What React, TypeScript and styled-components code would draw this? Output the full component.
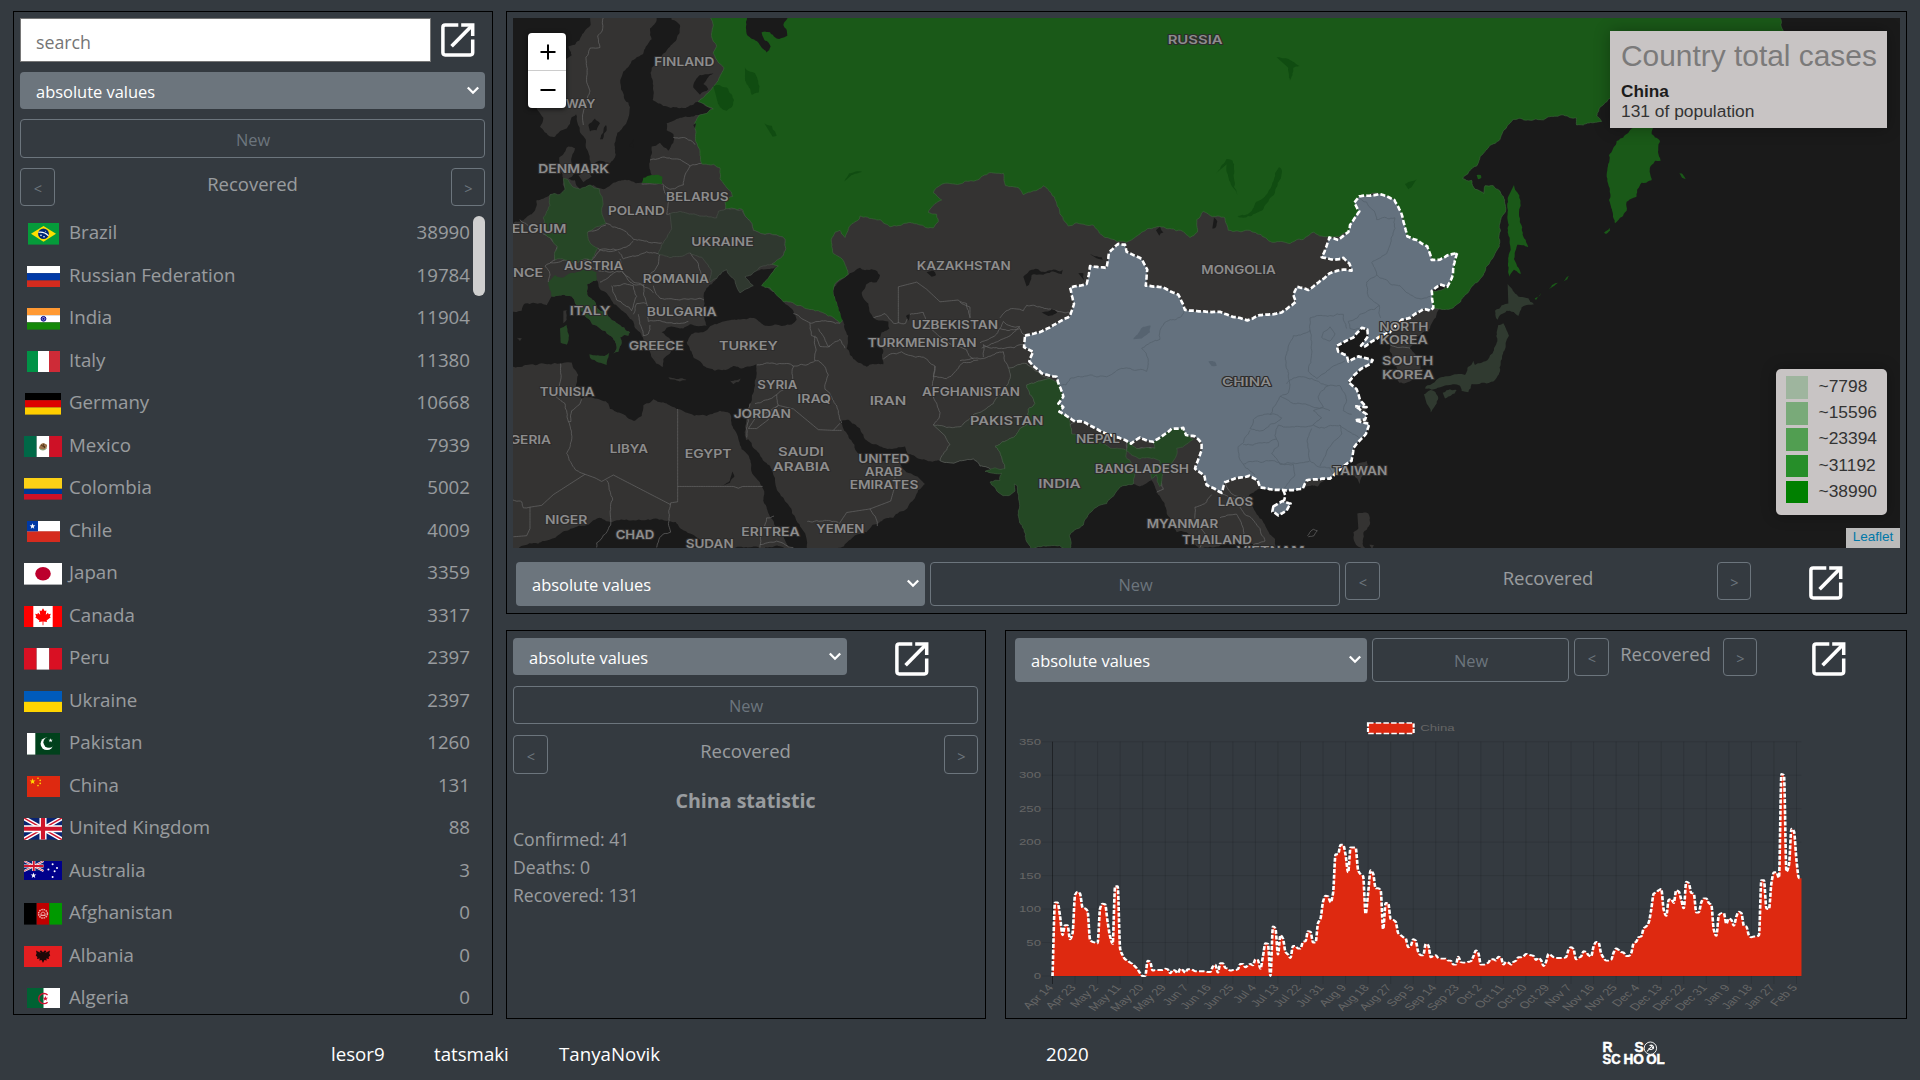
import React from "react";
import styled, { createGlobalStyle } from "styled-components";

const GlobalStyle = createGlobalStyle`
  *, *::before, *::after { box-sizing: border-box; }
  body {
    margin: 0;
    background: #343a40;
    color: rgba(255, 255, 255, 0.5);
    font-family: "Open Sans", "Noto Sans", sans-serif;
    overflow: hidden;
  }
`;

/* ------------------------------------------------------------------ layout */

const Page = styled.div`
  display: flex;
  flex-direction: column;
  width: 1920px;
  height: 1080px;
  padding: 11px 13px 0;
`;

const Main = styled.main`
  display: grid;
  grid-template-columns: 480px 1401px;
  column-gap: 13px;
  align-items: start;
  height: 1008px;
`;

const RightColumn = styled.div`
  display: grid;
  grid-template-rows: 603px 389px;
  row-gap: 16px;
`;

const BottomRow = styled.div`
  display: grid;
  grid-template-columns: 480px 902px;
  column-gap: 19px;
`;

const Panel = styled.section<{ $height?: number; $pad?: string }>`
  display: flex;
  flex-direction: column;
  min-width: 0;
  height: ${(p) => (p.$height ? `${p.$height}px` : "auto")};
  padding: ${(p) => p.$pad ?? "6px"};
  border: 1px solid #000;
  overflow: hidden;
`;

const Row = styled.div<{ $mt?: number; $h?: number; $w?: number; $ml?: number }>`
  display: flex;
  align-items: flex-start;
  margin-top: ${(p) => p.$mt ?? 0}px;
  margin-left: ${(p) => p.$ml ?? 0}px;
  width: ${(p) => (p.$w ? `${p.$w}px` : "auto")};
  height: ${(p) => (p.$h ? `${p.$h}px` : "auto")};
`;

/* ---------------------------------------------------------------- controls */

const Search = styled.input`
  width: 411px;
  height: 44px;
  padding: 3px 0 0 15px;
  border: 1px solid #767676;
  border-radius: 0;
  background: #fff;
  font: 17.8px "Open Sans", sans-serif;
  outline: none;
  &::placeholder { color: #757575; opacity: 1; }
`;

const SelectBox = styled.div<{ $w: number; $h: number; $ml?: number }>`
  display: flex;
  align-items: center;
  justify-content: space-between;
  flex: none;
  width: ${(p) => p.$w}px;
  height: ${(p) => p.$h}px;
  margin-left: ${(p) => p.$ml ?? 0}px;
  padding: 1px 5px 0 16px;
  border-radius: 4px;
  background: #6c757d;
  color: #fff;
  font-size: 16.45px;
  svg { margin-top: -2px; }
`;

const OutlineButton = styled.button<{ $w: number; $h: number; $ml?: number; $small?: boolean }>`
  flex: none;
  width: ${(p) => p.$w}px;
  height: ${(p) => p.$h}px;
  margin-left: ${(p) => p.$ml ?? 0}px;
  padding: ${(p) => (p.$small ? "3px 0 0 1px" : "1px 0 0 1px")};
  border: 1px solid #6c757d;
  border-radius: 4px;
  background: transparent;
  color: #6c757d;
  font: ${(p) => (p.$small ? "14.5px" : "16.4px")} "Open Sans", sans-serif;
`;

const StepLabel = styled.span`
  flex: 1;
  text-align: center;
  font-size: 18.5px;
  line-height: 31px;
  text-indent: -1px;
`;

const IconSlot = styled.span<{ $ml: number; $mt?: number }>`
  display: block;
  flex: none;
  width: 34px;
  height: 34px;
  margin-left: ${(p) => p.$ml}px;
  margin-top: ${(p) => p.$mt ?? 0}px;
  svg { display: block; }
`;

const ExpandIcon = ({ ml, mt }: { ml: number; mt?: number }) => (
  <IconSlot $ml={ml} $mt={mt}>
    <svg width="34" height="34" viewBox="0 0 34 34" fill="none" stroke="#fff" strokeWidth="3.5">
      <path d="M17.3 1.9H4.2Q1.9 1.9 1.9 4.2V29.6Q1.9 31.9 4.2 31.9H29.4Q31.7 31.9 31.7 29.6V16.6" />
      <path d="M20.2 1.9H31.7V13" />
      <path d="M10.6 23.2L30.8 2.8" strokeWidth="3.7" />
    </svg>
  </IconSlot>
);

const Select = ({ w, h, ml }: { w: number; h: number; ml?: number }) => (
  <SelectBox $w={w} $h={h} $ml={ml}>
    absolute values
    <svg width="14" height="9" viewBox="0 0 14 9" fill="none" stroke="#fff" strokeWidth="2.3">
      <path d="M1.8 1.5L7 6.7L12.2 1.5" />
    </svg>
  </SelectBox>
);

const Stepper = ({ h }: { h: number }) => (
  <>
    <OutlineButton $w={35} $h={h} $small>&lt;</OutlineButton>
    <StepLabel>Recovered</StepLabel>
    <OutlineButton $w={34} $h={h} $small>&gt;</OutlineButton>
  </>
);

/* ------------------------------------------------------------ country list */

const ListArea = styled.div`
  display: flex;
  height: 792px;
  margin-top: 10px;
  overflow: hidden;
`;

const List = styled.ul`
  flex: 1;
  margin: 0;
  padding: 0;
  list-style: none;
`;

const Item = styled.li`
  display: grid;
  grid-template-columns: 49px 1fr auto;
  height: 42.5px;
  padding-right: 3px;
  font-size: 18.7px;
  line-height: 31px;
`;

const FlagCell = styled.span`
  display: flex;
  justify-content: center;
  padding: 7px 3px 0 0;
  svg { display: block; flex: none; }
`;

const ScrollThumb = styled.div`
  width: 12px;
  height: 80px;
  border-radius: 6px;
  background: #cfcfcf;
`;

const star = (cx: number, cy: number, r: number) => {
  const pts: string[] = [];
  for (let i = 0; i < 10; i++) {
    const a = -Math.PI / 2 + (i * Math.PI) / 5;
    const q = i % 2 ? r * 0.4 : r;
    pts.push(`${(cx + q * Math.cos(a)).toFixed(2)},${(cy + q * Math.sin(a)).toFixed(2)}`);
  }
  return pts.join(" ");
};

const Bands = ({ colors, vertical, w }: { colors: string[]; vertical?: boolean; w: number }) => (
  <>
    {colors.map((c, i) =>
      vertical ? (
        <rect key={i} x={(w / colors.length) * i} width={w / colors.length} height="22" fill={c} />
      ) : (
        <rect key={i} y={(22 / colors.length) * i} width={w} height={22 / colors.length} fill={c} />
      )
    )}
  </>
);

const UnionJack = ({ w, h }: { w: number; h: number }) => (
  <>
    <rect width={w} height={h} fill="#0a2472" />
    <path d={`M0 0L${w} ${h}M${w} 0L0 ${h}`} stroke="#fff" strokeWidth={h * 0.2} />
    <path d={`M0 0L${w} ${h}M${w} 0L0 ${h}`} stroke="#cf142b" strokeWidth={h * 0.07} />
    <path d={`M${w / 2} 0V${h}M0 ${h / 2}H${w}`} stroke="#fff" strokeWidth={h * 0.32} />
    <path d={`M${w / 2} 0V${h}M0 ${h / 2}H${w}`} stroke="#cf142b" strokeWidth={h * 0.19} />
  </>
);

type Country = { name: string; value: number; w: number; h?: number; flag: React.ReactNode };

const countries: Country[] = [
  {
    name: "Brazil", value: 38990, w: 31,
    flag: (
      <>
        <rect width="31" height="22" fill="#059b3a" />
        <polygon points="3,11 15.5,3 28,11 15.5,19" fill="#fedf00" />
        <circle cx="15.5" cy="11" r="5.4" fill="#002776" />
        <path d="M10.4 9.5Q16 8.5 20.5 13" stroke="#fff" strokeWidth="1.1" fill="none" />
        <circle cx="13" cy="12.6" r=".8" fill="#fff" /><circle cx="16" cy="14" r=".8" fill="#fff" /><circle cx="17.6" cy="8.4" r=".5" fill="#fff" />
      </>
    ),
  },
  { name: "Russian Federation", value: 19784, w: 33, flag: <Bands w={33} colors={["#fff", "#0039a6", "#d52b1e"]} /> },
  {
    name: "India", value: 11904, w: 33,
    flag: (
      <>
        <Bands w={33} colors={["#ff9933", "#fff", "#138808"]} />
        <circle cx="16.5" cy="11" r="2.4" fill="#8080c8" stroke="#000088" strokeWidth="1" />
        <circle cx="16.5" cy="11" r=".9" fill="#000088" />
      </>
    ),
  },
  { name: "Italy", value: 11380, w: 33, flag: <Bands vertical w={33} colors={["#009246", "#fff", "#ce2b37"]} /> },
  { name: "Germany", value: 10668, w: 36, flag: <Bands w={36} colors={["#000", "#dd0000", "#ffce00"]} /> },
  {
    name: "Mexico", value: 7939, w: 38,
    flag: (
      <>
        <Bands vertical w={38} colors={["#006847", "#fff", "#ce1126"]} />
        <path d="M15 12Q16 8 19.5 7.2L23 9Q23.5 12.5 20 14Q16.5 14.5 15 12Z" fill="#9a7148" />
        <path d="M17 9L21 12M20 8Q18 10 21 11" stroke="#4c3219" fill="none" />
        <path d="M15.3 12.6Q19 16 22.7 12.4" stroke="#7a9a6a" fill="none" />
      </>
    ),
  },
  {
    name: "Colombia", value: 5002, w: 38,
    flag: (
      <>
        <rect width="38" height="11" fill="#fcd116" />
        <rect y="11" width="38" height="5.5" fill="#003893" />
        <rect y="16.3" width="38" height="5.7" fill="#ce1126" />
      </>
    ),
  },
  {
    name: "Chile", value: 4009, w: 33,
    flag: (
      <>
        <rect width="33" height="11" fill="#fff" />
        <rect y="10.5" width="33" height="11.5" fill="#d52b1e" />
        <rect width="11" height="10.5" fill="#0039a6" />
        <polygon points={star(5.5, 5.4, 3)} fill="#fff" />
      </>
    ),
  },
  {
    name: "Japan", value: 3359, w: 38,
    flag: (<><rect width="38" height="22" fill="#fff" /><ellipse cx="19" cy="11" rx="7.8" ry="6.9" fill="#bc002d" /></>),
  },
  {
    name: "Canada", value: 3317, w: 38,
    flag: (
      <>
        <rect width="38" height="22" fill="#fff" />
        <rect width="9.3" height="22" fill="#f00" /><rect x="28.7" width="9.3" height="22" fill="#f00" />
        <path d="M19 2.2L20.6 5.2L22.4 4.5L21.8 9L24 7L24.6 8.4L26.8 8L25.8 10.6L26.8 11.4L22.6 14.8L23 16.4L19.4 15.9V19.6H18.6V15.9L15 16.4L15.4 14.8L11.2 11.4L12.2 10.6L11.2 8L13.4 8.4L14 7L16.2 9L15.6 4.5L17.4 5.2Z" fill="#f00" />
      </>
    ),
  },
  { name: "Peru", value: 2397, w: 38, flag: <Bands vertical w={38} colors={["#d91023", "#fff", "#d91023"]} /> },
  { name: "Ukraine", value: 2397, w: 38, flag: <Bands w={38} colors={["#005bbb", "#ffd500"]} /> },
  {
    name: "Pakistan", value: 1260, w: 33,
    flag: (
      <>
        <rect width="33" height="22" fill="#01411c" /><rect width="8.3" height="22" fill="#fff" />
        <circle cx="20" cy="11" r="6.4" fill="#fff" /><circle cx="22" cy="9.5" r="5.6" fill="#01411c" />
        <polygon points={star(23.6, 7.6, 2.3)} fill="#fff" />
      </>
    ),
  },
  {
    name: "China", value: 131, w: 33, h: 21,
    flag: (
      <>
        <rect width="33" height="22" fill="#de2910" />
        <polygon points={star(5.6, 5.4, 3.1)} fill="#ffde00" />
        {[[11, 2.2], [13.2, 4.4], [13.2, 7.4], [11, 9.6]].map(([x, y]) => (
          <circle key={y} cx={x} cy={y} r=".8" fill="#ffde00" />
        ))}
      </>
    ),
  },
  { name: "United Kingdom", value: 88, w: 38, flag: <UnionJack w={38} h={22} /> },
  {
    name: "Australia", value: 3, w: 38, h: 19,
    flag: (
      <>
        <rect width="38" height="22" fill="#00008b" />
        <UnionJack w={19.5} h={10} />
        <polygon points={star(9.5, 14.5, 3)} fill="#fff" />
        {[[28.6, 3.2], [24.4, 8.6], [33, 7], [28.6, 16], [30.6, 10.2]].map(([x, y]) => (
          <circle key={x + y} cx={x} cy={y} r="1" fill="#fff" />
        ))}
      </>
    ),
  },
  {
    name: "Afghanistan", value: 0, w: 38,
    flag: (
      <>
        <Bands vertical w={38} colors={["#000", "#bf0000", "#009900"]} />
        <circle cx="19" cy="11" r="4.4" fill="none" stroke="#f1a9a9" strokeWidth="1.5" strokeDasharray="1.6 .7" />
        <path d="M16.4 12.6H21.6M17 10.5Q19 7.6 21 10.5V12.5H17Z" stroke="#f5c4c4" strokeWidth=".8" fill="none" />
      </>
    ),
  },
  {
    name: "Albania", value: 0, w: 38, h: 21,
    flag: (
      <>
        <rect width="38" height="22" fill="#e41e20" />
        <path d="M19 6.2L17 4.2L15.6 5.6L17 7L12 4.4L12.6 7.6L11.8 9.6L13.4 11L13 13L15.8 12.6L15.2 14.6L17.6 14L19 17L20.4 14L22.8 14.6L22.2 12.6L25 13L24.6 11L26.2 9.6L25.4 7.6L26 4.4L21 7L22.4 5.6L21 4.2Z" fill="#1d0808" />
      </>
    ),
  },
  {
    name: "Algeria", value: 0, w: 33,
    flag: (
      <>
        <rect width="33" height="22" fill="#fff" /><rect width="16.5" height="22" fill="#006233" />
        <path d="M20.6 7.1A5.2 5.2 0 1 0 20.6 14.5" fill="none" stroke="#d21034" strokeWidth="1.3" />
        <polygon points={star(18.4, 10.8, 2.8)} fill="#d21034" />
      </>
    ),
  },
];

/* --------------------------------------------------------------------- map */

type Pt = [number, number];
/* Outlines are digitised on three sheets; each sheet starts at its own x. */
const W = 0;
const M = 1380;
const E = 2820;
type Seg = [number, string];

const parse = (segs: Seg[]): Pt[] =>
  segs.flatMap(([dx, s]) =>
    s.trim().split(/\s+/).map((p) => {
      const [x, y] = p.split(",").map(Number);
      return [x + dx, y] as Pt;
    })
  );

const noise = (x: number, y: number) => {
  const v = Math.sin(x * 12.9898 + y * 78.233) * 43758.5453;
  return (v - Math.floor(v)) * 2 - 1;
};

/* Midpoint displacement keyed on the midpoint, so that shared edges still meet. */
const roughen = (a: Pt, b: Pt, amp: number, out: Pt[]) => {
  const dx = b[0] - a[0];
  const dy = b[1] - a[1];
  const len = Math.hypot(dx, dy);
  if (len < 8) {
    out.push(b);
    return;
  }
  const mx = (a[0] + b[0]) / 2;
  const my = (a[1] + b[1]) / 2;
  const m: Pt = [mx + noise(mx, my) * len * amp, my + noise(my, mx) * len * amp];
  roughen(a, m, amp, out);
  roughen(m, b, amp, out);
};

const trace = (segs: Seg[], closed = true, amp = 0.12) => {
  const src = parse(segs);
  const out: Pt[] = [src[0]];
  for (let i = 1; i < src.length; i++) roughen(src[i - 1], src[i], amp, out);
  return "M" + out.map((p) => `${p[0].toFixed(1)} ${p[1].toFixed(1)}`).join("L") + (closed ? "Z" : "");
};

const land: Seg[][] = [
  // Scandinavia
  [[W, "272,45 272,70 245,100 225,125 205,130 215,155 180,180 100,200 84,290 110,302 130,330 120,355 150,382 165,383 200,360 215,328 228,320 240,370 262,420 275,462 300,450 330,458 345,440 352,372 375,350 390,300 375,280 363,250 370,200 395,170 430,150 455,110 450,80 470,55 470,45"]],
  // Eurasia
  [
    [W, "515,45 515,55 540,70 530,110 490,150 455,190 460,240 458,280 490,297 530,300 595,285 640,305 598,322 540,330 500,345 500,365 520,375 520,400 505,422 480,400 455,410 450,450 455,490 425,512 375,503 340,512 310,530 280,518 262,530 240,530 225,505 205,500 225,482 212,468 215,440 225,415 205,410 178,440 180,480 190,500 195,540 150,545 110,560 95,600 60,620 30,630 30,870 65,870 75,850 100,848 140,855 155,830 190,825 215,830 225,850 260,890 300,920 330,940 345,955 350,975 340,990 355,985 365,960 360,945 385,940 390,930 360,910 330,890 290,860 265,830 262,795 290,785 300,810 340,850 380,880 400,900 420,930 430,950 450,985 455,1000 488,1028 490,1005 510,990 520,960 485,930 500,918 540,920 570,908 620,912 610,870 612,820 650,780 680,755 705,785 720,820 760,800 735,775 770,758 835,745 815,765 790,800 850,845 880,870 890,895 850,912 800,912 750,890 700,895 650,908 620,925 575,935 560,960 580,1000 620,1030 660,1035 700,1025 725,1032 770,1020 765,1080 750,1130 742,1165 738,1232 745,1230 790,1290 820,1330 830,1370 870,1420 905,1480 923,1540 1000,1540 1040,1520 1100,1490 1180,1450 1240,1400 1275,1355 1240,1330 1205,1310 1195,1275 1160,1290 1110,1295 1085,1300 1075,1270 1050,1230 1030,1200 1020,1180 1045,1175 1080,1200 1095,1230 1140,1250 1190,1255 1215,1250 1222,1270 1260,1285 1320,1290 1380,1290"],
    [M, "40,1285 60,1305 135,1312 75,1320 100,1325 125,1325 120,1345 90,1350 130,1388 165,1375 163,1355 172,1360 175,1430 190,1480 213,1540 330,1540 328,1500 370,1470 380,1450 440,1410 475,1370 520,1355 540,1362 575,1345 590,1375 600,1390 620,1430 635,1465 650,1490 680,1490 700,1500 720,1540 945,1540 945,1510 920,1480 890,1440 860,1400 885,1375 905,1365 970,1370 1030,1368 1100,1340 1175,1290 1175,1250 1215,1220 1228,1185 1215,1140 1195,1090 1165,1070 1235,1012 1190,1000 1160,1010 1130,970 1210,918 1225,940 1205,970 1255,945 1290,950 1290,985 1310,1030 1318,1072 1350,1068 1388,1050 1380,1010 1350,975 1370,945 1410,920 1430,880 1440,860 1440,500 900,400 500,300 0,200"],
    [W, "900,45"],
  ],
  // Africa
  [[W, "30,1027 80,1022 130,1018 180,1018 215,1015 225,1035 235,1050 225,1090 245,1115 325,1130 330,1145 370,1160 405,1178 425,1165 430,1135 460,1118 500,1130 530,1145 620,1165 660,1150 690,1158 700,1200 740,1270 760,1330 790,1370 800,1420 830,1480 880,1540 30,1540"]],
  // Islands
  [[W, "235,490 262,475 275,495 250,510"]],
  [[W, "190,870 200,868 200,895 190,905"]],
  [[W, "505,1056 560,1064 540,1068 510,1062"]],
  [[W, "690,1066 722,1060 715,1070 700,1076"]],
  [[W, "458,995 485,1005 490,1025 470,1015"]],
  [[W, "50,945 66,948 60,955"]],
  [[M, "1190,1300 1220,1290 1218,1320 1198,1355 1182,1330"]],
  [[M, "1192,1438 1225,1438 1230,1468 1210,1492 1218,1540 1185,1520 1180,1490 1195,1480"]],
  [[M, "1228,1525 1242,1527 1238,1540"]],
];

const russia: Seg[] = [
  [W, "632,45 640,70 635,100 650,130 640,150 672,190 655,225 595,285 610,290 640,305 598,322 585,360 590,400 600,430 605,458 640,460 660,470 660,500 685,530 698,550 675,560 675,590 725,585 735,605 755,625 760,645 800,655 855,670 850,715 825,725 815,740 835,745 815,765 785,800 850,845 900,855 955,870 985,885 1020,905 1035,890 1015,860 1000,815 1045,768 1030,730 1000,710 995,690 1005,650 1020,645 1035,665 1045,640 1080,605 1140,615 1170,635 1215,625 1260,630 1300,638 1315,620 1310,600 1285,595 1305,570 1325,560 1300,540 1310,525 1380,515"],
  [M, "60,500 85,485 130,485 137,520 175,525 190,545 250,520 290,570 325,633 345,625 400,630 435,665 500,678 540,655 590,635 630,640 690,665 712,650 710,615 730,592 795,610 805,645 870,645 935,678 990,682 1030,670 1060,650 1110,665 1165,650 1200,595 1185,565 1200,550 1260,542 1300,558 1325,600 1340,660 1400,690 1415,727 1440,727 1492,708 1462,803 1415,815 1420,862 1440,865"],
  [E, "20,866 40,862 62,845 90,810 130,770 140,745 165,710 178,690 178,630 197,590 190,550 160,520 135,520 132,542 105,530 95,505 68,500 110,465 130,430 180,390 210,345 240,331 300,335 370,322 410,330 410,350 430,350 485,340 470,325 480,300 510,275 600,230 1020,230 1020,45"],
];

const russianIslands: Seg[][] = [
  [[E, "580,355 550,385 530,395 507,435 500,490 507,560 525,625 560,590 560,565 590,550 592,530 605,512 635,505 632,465 645,450 662,450 655,430 660,395 645,385 635,375 640,355"]],
  [[E, "222,518 233,540 237,600 265,692 232,685 222,725 242,768 222,755 208,775 212,700 203,600 205,550"]],
  [[W, "425,512 430,498 455,490 487,495 487,515"]],
  [[E, "718,484 726,486 737,502 726,498"]],
  [[E, "492,652 508,638 510,646 498,655"]],
  [[E, "284,836 303,820 300,828 288,840"]],
  [[E, "322,812 336,798 354,792 336,804"]],
  [[E, "370,788 387,772 382,782"]],
  [[E, "110,490 122,490 124,498 114,502"]],
];

const germany: Seg[] = [[W, "190,500 205,505 215,520 240,530 270,518 298,530 308,560 305,590 318,625 262,650 270,680 293,695 275,728 165,728 172,690 135,655 130,610 150,575 150,545 180,545 195,530"]];
const italy: Seg[][] = [
  [[W, "165,770 185,778 210,765 240,760 290,762 290,785 262,795 265,830 290,860 330,890 360,910 390,930 385,940 360,945 365,960 355,985 340,990 350,975 345,955 330,940 300,920 260,890 225,850 215,830 190,825 155,830 148,810 145,790"]],
  [[W, "268,992 300,996 328,988 320,1022 295,1015 270,1002"]],
  [[W, "180,920 200,910 207,940 200,965 182,960"]],
];
const ukraine: Seg[] = [[W, "510,598 600,605 650,610 655,592 725,587 735,605 755,625 760,645 800,655 855,670 850,715 815,740 770,758 735,775 760,800 720,820 705,785 680,755 650,780 625,790 635,760 605,720 570,708 530,718 475,712 490,680 515,640"]];
const pakistan: Seg[] = [
  [W, "1300,1190 1340,1197 1380,1195"],
  [M, "60,1155 100,1130 150,1060 145,1030 200,1018 240,1045 270,1060 200,1078 225,1130 205,1145 200,1190 160,1225 105,1250 135,1312 60,1305 40,1285 0,1290"],
  [W, "1320,1290 1350,1245 1335,1220"],
];
const india: Seg[] = [[M, "270,1060 200,1078 225,1130 205,1145 200,1190 160,1225 105,1250 135,1312 75,1320 100,1325 125,1325 120,1345 90,1350 130,1388 165,1375 163,1355 172,1360 175,1430 190,1480 213,1540 330,1540 328,1500 370,1470 380,1450 440,1410 475,1370 520,1355 515,1300 498,1280 500,1262 540,1285 600,1290 600,1305 565,1310 575,1340 590,1330 600,1362 610,1320 640,1290 650,1255 700,1230 680,1215 670,1195 635,1195 580,1240 585,1255 530,1256 505,1235 500,1262 450,1255 335,1215 330,1190 300,1150 310,1110 300,1075"]];
const japan: Seg[][] = [
  [[E, "203,795 235,830 265,835 282,852 245,860 235,885 200,870 172,895 165,870 185,855 205,850"]],
  [[E, "175,910 190,905 207,940 190,985 180,1040 160,1068 125,1072 95,1075 85,1098 65,1095 60,1080 30,1078 -10,1088 -45,1088 -25,1075 30,1053 75,1050 100,1010 105,1022 145,1005 165,970 170,930"]],
  [[E, "8,1100 30,1090 50,1092 15,1116"]],
  [[M, "1392,1104 1412,1092 1434,1110 1430,1130 1412,1155 1400,1130"]],
];

const china: Seg[] = [[M, "195,940 240,930 300,900 330,885 342,850 330,805 380,795 390,745 440,750 447,708 475,683 495,685 500,705 545,725 562,755 557,800 610,805 655,825 675,868 780,873 862,897 900,882 965,875 1008,845 1000,825 1010,803 1045,812 1110,765 1150,755 1175,758 1168,738 1150,722 1125,727 1085,720 1108,665 1135,672 1165,650 1170,630 1198,592 1183,567 1198,550 1258,543 1303,560 1325,600 1342,662 1370,672 1402,690 1415,728 1440,727 1462,715 1492,708 1482,740 1478,770 1462,803 1440,797 1415,815 1420,862 1410,870 1390,865 1350,890 1325,895 1290,930 1255,945 1215,970 1203,968 1225,940 1222,922 1205,918 1180,945 1130,968 1135,985 1160,995 1165,1012 1195,998 1238,1008 1232,1018 1200,1035 1165,1070 1190,1090 1200,1120 1220,1140 1185,1138 1220,1160 1215,1175 1185,1177 1228,1187 1218,1215 1180,1255 1175,1290 1150,1305 1110,1340 1040,1345 1028,1368 970,1372 900,1365 893,1345 868,1332 795,1350 785,1380 740,1358 732,1330 705,1312 725,1262 725,1240 705,1222 678,1218 670,1198 635,1200 580,1237 540,1225 513,1242 495,1232 440,1215 370,1180 345,1180 298,1153 310,1140 295,1130 310,1110 290,1055 245,1045 208,1012 220,985 192,972"]];
const hainan: Seg[] = [[M, "940,1418 968,1403 992,1410 980,1430 955,1443 937,1432"]];

const water: Seg[][] = [
  // Caspian, Aral, Kazakh lakes
  [[W, "1045,770 1080,750 1120,755 1140,770 1130,790 1100,795 1085,820 1105,850 1120,890 1165,900 1168,920 1145,930 1140,965 1150,985 1150,1020 1100,1027 1060,1005 1040,975 1045,940 1030,900 1015,860 1000,815 1015,790"]],
  [[W, "740,45 740,95 770,115 800,147 812,130 785,90 810,90 830,108 862,100 850,70 865,45"]],
  [[W, "1280,762 1300,758 1308,770 1295,775"]],
  [[M, "190,775 215,755 300,760 308,755 305,768 260,765 215,770 200,802"]],
  [[M, "390,712 425,720 428,727 405,720"]],
  [[M, "355,765 370,765 372,785"]],
  [[M, "245,875 275,865 292,875 265,885"]],
  [[M, "588,645 600,635 610,650 598,660"]],
  [[M, "762,610 772,620 762,640 757,640"]],
  [[W, "265,350 285,332 300,345 290,365 270,368"]],
  [[W, "300,390 318,350 320,365 308,390"]],
  [[W, "580,245 600,210 640,205 610,235 625,250 600,265"]],
  [[W, "585,360 580,350 588,345"]],
  [[W, "388,410 400,390 400,412"]],
  [[W, "668,1360 690,1345 698,1320 703,1335 690,1352"]],
  [[W, "1218,885 1230,880 1225,898"]],
];

const greenLakes: Seg[][] = [
  [[W, "640,240 680,245 702,280 695,300 680,310 660,300 650,275"]],
  [[W, "735,190 765,205 775,260 755,265 735,225"]],
  [[W, "793,345 815,352 830,380 818,383"]],
  [[W, "1033,508 1048,485 1090,480 1055,490"]],
  [[M, "957,468 965,475 945,540 905,590 850,610 833,605 870,595 915,550 935,520 945,485"]],
  [[M, "768,485 800,445 818,450 822,500 832,545 815,520 800,460"]],
  [[M, "950,160 985,165 1018,185 1000,190 990,225 985,190"]],
  [[M, "1335,515 1370,502 1345,530"]],
];

const chinaLakes: Seg[][] = [
  [[M, "520,950 550,915 572,912 570,930 545,948"]],
  [[M, "745,1012 765,1013 770,1025 755,1025"]],
];

const borders: Seg[][] = [
  [[W, "310,50 308,80 293,100 300,133 270,135 258,160 260,230 270,255 255,300 250,350"]],
  [[W, "520,385 550,385 585,405"]],
  [[W, "450,448 530,445 570,465 605,458"]],
  [[W, "487,515 510,530 550,518 555,490 570,465"]],
  [[W, "487,515 425,515"]],
  [[W, "490,520 505,560 500,600 510,598"]],
  [[W, "318,625 360,640 400,670 440,675 485,680"]],
  [[W, "262,650 318,630"]],
  [[W, "293,695 350,700 400,675"]],
  [[W, "355,705 370,725 440,705 480,712 475,740 430,800 390,790 370,765 360,725"]],
  [[W, "275,728 300,700 350,700"]],
  [[W, "150,735 200,728 275,728 275,750 340,760 365,745"]],
  [[W, "60,615 100,640 130,655"]],
  [[W, "130,655 172,690 165,728 135,745 150,770 145,790"]],
  [[W, "300,790 340,765 365,760 400,790 430,800 460,820"]],
  [[W, "335,800 350,840 395,870 410,830 400,800 340,800"]],
  [[W, "460,800 480,835 540,840 600,835 612,840"]],
  [[W, "430,800 440,850 410,850 400,880"]],
  [[W, "440,850 445,900 530,905 565,900"]],
  [[W, "415,880 430,940 445,935 450,910"]],
  [[W, "570,708 590,730 605,770 600,790 625,790"]],
  [[W, "880,878 935,905 990,900 1020,905"]],
  [[W, "930,905 935,940 950,945 960,970 990,970"]],
  [[W, "955,920 985,970 1020,950 1035,975"]],
  [[W, "945,940 945,1010 955,1010 985,1050 975,1090 1015,1150 1025,1185"]],
  [[W, "770,1022 830,1020 880,1025 945,1010"]],
  [[W, "880,1025 880,1080 830,1105 765,1130"]],
  [[W, "830,1105 835,1135 770,1165"]],
  [[W, "750,1130 745,1180 740,1225"]],
  [[W, "1110,1425 1132,1473"]],
  [[W, "922,1460 1015,1463"]],
  [[W, "182,1018 178,1080 168,1110 195,1130 200,1150 205,1180"]],
  [[W, "245,1118 240,1130 215,1150 213,1180 205,1180 212,1240 200,1270 218,1305 255,1328"]],
  [[W, "320,1345 338,1400 332,1470 290,1520 290,1533"]],
  [[W, "512,1408 512,1490 490,1495 470,1533"]],
  [[W, "780,1533 780,1490 800,1450 822,1445"]],
  [[W, "780,1525 830,1515 880,1533"]],
  [[W, "39,1400 65,1405 70,1422 90,1420"]],
  [[W, "1120,890 1155,878 1180,905 1217,905 1230,880 1270,875 1330,950 1400,980 1420,1005"]],
  [[W, "1150,1005 1205,985 1270,1000 1305,1025 1300,1055 1340,1060 1390,1015 1435,1008"]],
  [[W, "1305,1025 1300,1110 1320,1155 1300,1190"]],
  [[M, "0,845 20,850 30,890"]],
  [[M, "120,890 150,865 190,870 200,855 270,865 330,875"]],
  [[M, "60,960 110,935 130,900 180,915 140,945 90,965 65,975"]],
  [[M, "0,1010 60,1005 130,985 145,1030"]],
  [[M, "70,1000 70,965 190,965"]],
  [[M, "120,920 180,920 195,940"]],
  [[M, "335,1215 330,1190 345,1180"]],
  [[M, "500,1240 500,1262 530,1256 585,1255"]],
  [[M, "590,1378 610,1370 600,1330"]],
  [[M, "755,1385 740,1405 705,1420 710,1470 740,1500 720,1533"]],
  [[M, "795,1350 820,1385 860,1400"]],
  [[M, "785,1385 830,1400 900,1480 915,1515 880,1525"]],
  [[M, "780,1450 830,1440 850,1480 855,1510"]],
  [[M, "1290,965 1350,975"]],
  [[M, "1042,1500 1060,1482 1072,1486 1062,1500 1045,1503"]],
];

/* Desert frontiers are ruled lines. */
const ruledBorders: Seg[][] = [
  [[W, "533,1145 533,1405 512,1408"]],
  [[W, "533,1362 700,1362 715,1367 728,1362 788,1362"]],
  [[W, "255,1328 160,1385 125,1415 90,1420 90,1480 80,1500 40,1503"]],
  [[W, "255,1328 285,1338 305,1348 340,1330 512,1413"]],
  [[W, "770,1165 745,1200 770,1200 805,1175 800,1162 835,1135 880,1145 955,1203 1000,1205 1020,1185"]],
  [[W, "1000,1205 1025,1205"]],
  [[W, "1015,1470 1040,1435 1110,1425 1172,1403 1185,1360 1185,1310"]],
  [[W, "1195,905 1195,803 1250,790 1280,810 1320,845 1375,840 1385,850 1410,860 1410,890"]],
];

const provinces: Seg[][] = [
  [[M, "672,870 665,885 620,900 600,925 600,950 545,975 565,1010 560,1040 500,1030 460,1045 440,1055 390,1050 330,1060 318,1078 300,1080"]],
  [[M, "1198,555 1235,585 1250,615 1305,610 1305,640 1280,710 1235,735 1250,770 1220,790 1225,830 1258,855 1262,890"]],
  [[M, "1250,770 1290,795 1320,800 1370,835 1410,830"]],
  [[M, "1258,855 1200,880 1165,900 1170,920 1200,920"]],
  [[M, "1050,930 1050,890 1120,885 1150,880 1160,920"]],
  [[M, "1050,925 1000,940 980,990 985,1100 960,1110 1000,1130 1060,1140 1110,1150"]],
  [[M, "1050,925 1055,980 1045,1040 1070,1060 1120,1025 1155,1010"]],
  [[M, "1090,930 1110,915 1125,935 1110,955 1085,945 1090,930"]],
  [[M, "980,1075 1030,1055 1065,1065 1105,1080 1140,1080 1160,1120 1150,1150 1175,1160"]],
  [[M, "1105,1080 1075,1110 1090,1140 1060,1150 1085,1170 1060,1190 955,1190 945,1220 955,1250 935,1270"]],
  [[M, "960,1110 940,1140 930,1160 965,1170 910,1205 870,1200 880,1175 930,1160"]],
  [[M, "870,1205 850,1240 835,1250 850,1300 885,1330"]],
  [[M, "850,1245 920,1240 950,1230"]],
  [[M, "850,1300 930,1290 970,1300 1000,1300 1005,1330 970,1370"]],
  [[M, "935,1270 960,1300 1050,1290 1055,1200"]],
  [[M, "1060,1190 1140,1190 1145,1215 1110,1250 1080,1305"]],
  [[M, "1140,1190 1170,1210 1200,1230"]],
  [[M, "1050,1290 1070,1305 1110,1310 1120,1330"]],
];

type Label = [string, number, number, number, number];
/* text, left, right and middle on the sheet grid, then the sheet */
const labels: Label[] = [
  ["FINLAND", 463, 643, 171, W], ["WAY", 197, 286, 290, W], ["DENMARK", 115, 327, 470, W],
  ["BELARUS", 498, 686, 549, W], ["POLAND", 324, 494, 590, W], ["BELGIUM", 7, 199, 639, W],
  ["UKRAINE", 574, 761, 675, W], ["AUSTRIA", 192, 370, 744, W], ["FRANCE", -46, 130, 763, W],
  ["ROMANIA", 428, 627, 780, W], ["ITALY", 209, 331, 870, W], ["BULGARIA", 440, 650, 873, W],
  ["GREECE", 386, 551, 968, W], ["TURKEY", 657, 833, 967, W], ["TUNISIA", 119, 284, 1096, W],
  ["SYRIA", 772, 892, 1077, W], ["IRAQ", 892, 993, 1116, W], ["JORDAN", 701, 873, 1158, W],
  ["IRAN", 1109, 1219, 1122, W], ["ALGERIA", -22, 153, 1231, W], ["LIBYA", 329, 444, 1256, W],
  ["EGYPT", 554, 695, 1270, W], ["SAUDI", 834, 972, 1265, W], ["ARABIA", 818, 990, 1305, W],
  ["UNITED", 1075, 1228, 1283, W], ["ARAB", 1094, 1208, 1319, W], ["EMIRATES", 1049, 1255, 1355, W],
  ["NIGER", 135, 262, 1454, W], ["CHAD", 347, 463, 1497, W], ["SUDAN", 557, 701, 1520, W],
  ["ERITREA", 724, 899, 1489, W], ["YEMEN", 949, 1093, 1480, W], ["KAZAKHSTAN", 1250, 1532, 743, W],
  ["UZBEKISTAN", 1235, 1494, 907, W], ["TURKMENISTAN", 1103, 1430, 958, W],
  ["AFGHANISTAN", 1266, 1560, 1097, W],
  ["RUSSIA", 623, 788, 109, M], ["MONGOLIA", 724, 947, 755, M], ["CHINA", 786, 934, 1068, M],
  ["NORTH", 1258, 1405, 915, M], ["KOREA", 1259, 1403, 951, M], ["SOUTH", 1266, 1420, 1008, M],
  ["KOREA", 1266, 1422, 1048, M], ["PAKISTAN", 30, 250, 1178, M], ["NEPAL", 348, 480, 1226, M],
  ["BANGLADESH", 404, 687, 1310, M], ["INDIA", 235, 362, 1354, M], ["TAIWAN", 1117, 1282, 1318, M],
  ["LAOS", 773, 879, 1405, M], ["MYANMAR", 560, 775, 1464, M], ["THAILAND", 666, 876, 1511, M],
  ["VIETNAM", 830, 1034, 1542, M],
];

const MapCanvas = styled.div`
  position: relative;
  width: 1387px;
  height: 530px;
  background: #1a1a1a;
  overflow: hidden;
  font-family: "Liberation Sans", Arial, sans-serif;
  > svg { display: block; }
`;

const MapLabel = styled.text`
  font: 600 12.1px Inter, sans-serif;
  fill: #8d8d8d;
  stroke: #2d2c2c;
  stroke-width: 2px;
  stroke-linejoin: round;
  paint-order: stroke;
`;

const WorldMap = () => (
  <svg width="1387" height="530" viewBox="513 18 1387 530">
    <g transform="translate(500 0) scale(0.33333 0.35714)" strokeLinejoin="round">
      <g fill="#343332">
        {land.map((s, i) => <path key={i} d={trace(s)} />)}
      </g>
      <g fill="none" stroke="#686868" strokeWidth="2">
        {borders.map((s, i) => <path key={i} d={trace(s, false, 0.1)} />)}
        {ruledBorders.map((s, i) => <path key={i} d={trace(s, false, 0)} />)}
      </g>
      <g stroke="#6a6f6a" strokeWidth="1.6">
        <path d={trace(russia)} fill="#1a5918" stroke="#3f6a3e" />
        {russianIslands.map((s, i) => <path key={i} d={trace(s)} fill="#1a5918" stroke="none" />)}
        <path d={trace(pakistan)} fill="#30352f" />
        <path d={trace(india)} fill="#244824" stroke="#3f5c3f" />
        <path d={trace(germany)} fill="#264726" stroke="#3f5c3f" />
        <path d={trace(ukraine)} fill="#2f382f" stroke="#4c544c" />
        {italy.map((s, i) => <path key={i} d={trace(s)} fill="#264726" stroke="none" />)}
        {japan.map((s, i) => <path key={i} d={trace(s)} fill="#303a30" stroke="none" />)}
      </g>
      <g fill="#1a1a1a">{water.map((s, i) => <path key={i} d={trace(s)} />)}</g>
      <g fill="#104c11">{greenLakes.map((s, i) => <path key={i} d={trace(s)} />)}</g>
      <path d={trace(china, true, 0.05)} fill="#64717e" />
      <path d={trace(hainan, true, 0.05)} fill="#64717e" />
      <g fill="#566370">{chinaLakes.map((s, i) => <path key={i} d={trace(s)} />)}</g>
      <g fill="none" stroke="#56626e" strokeWidth="2.6">
        {provinces.map((s, i) => <path key={i} d={trace(s, false)} />)}
      </g>
      <g fill="none" stroke="#fff" strokeWidth="7.6" strokeDasharray="15 6.5">
        <path d={trace(china, true, 0.04)} />
        <path d={trace(hainan, true, 0.04)} />
        <path d={trace([[M, "970,1372 976,1388 972,1403"]], false, 0)} />
      </g>
    </g>
    {labels.map(([text, x0, x1, y, dx]) => (
      <MapLabel
        key={text + y}
        x={500 + (x0 + dx) / 3}
        y={y / 2.8 + 4.7}
        textLength={(x1 - x0) / 3}
        lengthAdjust="spacingAndGlyphs"
      >
        {text}
      </MapLabel>
    ))}
  </svg>
);

const ZoomControl = styled.div`
  position: absolute;
  left: 15px;
  top: 15px;
  width: 38px;
  border-radius: 4px;
  background: #fff;
  box-shadow: 0 1px 5px rgba(0, 0, 0, 0.65);
`;

const ZoomButton = styled.div<{ $line?: boolean }>`
  display: flex;
  align-items: center;
  justify-content: center;
  height: ${(p) => (p.$line ? 38 : 37)}px;
  padding-left: 2px;
  border-bottom: ${(p) => (p.$line ? "1px solid #ccc" : "none")};
  svg { display: block; }
`;

const InfoBox = styled.div`
  position: absolute;
  right: 13px;
  top: 13px;
  width: 277px;
  height: 97px;
  padding: 6px 11px;
  background: #c8c4c4;
  box-shadow: 0 0 15px rgba(0, 0, 0, 0.3);
  color: #333;
  font-size: 17.4px;
  line-height: 20px;
  b { display: block; color: #1c1c1c; font-size: 17.2px; }
`;

const InfoTitle = styled.h4`
  margin: 0 0 7px;
  padding-top: 1px;
  color: #7b7a7a;
  font-size: 29.9px;
  font-weight: 400;
  line-height: 36px;
  white-space: nowrap;
`;

const Legend = styled.div`
  position: absolute;
  right: 13px;
  top: 351px;
  width: 111px;
  height: 146px;
  padding: 7px 10px;
  border-radius: 5px;
  background: #c8c4c4;
  box-shadow: 0 0 15px rgba(0, 0, 0, 0.3);
  color: #333;
  font-size: 17.4px;
`;

const LegendRow = styled.div`
  display: flex;
  height: 26.2px;
  line-height: 20px;
`;

const Swatch = styled.i<{ $c: string }>`
  width: 22px;
  height: 22.5px;
  margin-right: 10.5px;
  background: ${(p) => p.$c};
`;

const Attribution = styled.div`
  position: absolute;
  right: 0;
  bottom: 0;
  width: 54px;
  height: 20px;
  background: #bbb;
  color: #0078a8;
  font-size: 13.5px;
  line-height: 18px;
  text-align: center;
`;

const legend: [string, string][] = [
  ["#9eb59e", "~7798"], ["#79aa79", "~15596"], ["#519e51", "~23394"], ["#268e29", "~31192"], ["#008000", "~38990"],
];

/* ------------------------------------------------------------------- chart */

const daily = [
  0, 110, 110, 90, 61, 76, 76, 55, 64, 121, 126, 123, 102, 101, 97, 54, 51, 50, 49, 101, 108, 107, 81, 59, 48, 134, 134, 41, 31, 25,
  23, 20, 18, 14, 10, 4, 0, 0, 23, 21, 8, 9, 9, 9, 9, 11, 10, 4, 9, 8, 4, 11, 9, 5, 10, 10, 9, 7, 7, 7,
  7, 7, 6, 6, 14, 17, 5, 19, 19, 12, 11, 8, 9, 9, 10, 18, 18, 13, 16, 18, 16, 25, 24, 11, 29, 49, 48, 0, 74, 71,
  32, 61, 56, 36, 32, 27, 45, 45, 41, 41, 51, 52, 67, 66, 50, 50, 79, 86, 111, 120, 119, 110, 124, 182, 182, 196, 196, 181, 155, 192,
  192, 192, 158, 152, 149, 93, 124, 158, 153, 131, 131, 128, 70, 109, 109, 85, 84, 81, 64, 61, 58, 56, 43, 45, 55, 53, 36, 31, 31, 48,
  46, 28, 30, 31, 27, 26, 26, 26, 23, 23, 17, 17, 29, 21, 20, 20, 21, 22, 29, 38, 34, 17, 17, 18, 20, 25, 25, 23, 29, 28,
  17, 21, 20, 17, 21, 23, 28, 28, 29, 33, 32, 31, 30, 24, 27, 24, 15, 21, 33, 31, 28, 27, 27, 27, 27, 28, 39, 43, 40, 25,
  27, 29, 37, 36, 31, 29, 44, 51, 50, 34, 27, 23, 23, 24, 35, 41, 39, 36, 35, 30, 30, 34, 49, 51, 58, 59, 71, 74, 80, 99,
  123, 125, 128, 130, 99, 90, 114, 115, 109, 128, 126, 114, 101, 141, 139, 124, 123, 95, 95, 110, 116, 116, 109, 106, 69, 60, 91, 94, 94, 78,
  86, 84, 75, 89, 96, 94, 75, 74, 61, 58, 59, 59, 61, 143, 143, 101, 100, 139, 155, 155, 147, 302, 300, 156, 166, 220, 216, 173, 146, 146,
];

const dates = [
  "Apr 14", "Apr 23", "May 2", "May 11", "May 20", "May 29", "Jun 7", "Jun 16", "Jun 25", "Jul 4", "Jul 13", "Jul 22",
  "Jul 31", "Aug 9", "Aug 18", "Aug 27", "Sep 5", "Sep 14", "Sep 23", "Oct 2", "Oct 11", "Oct 20", "Oct 29", "Nov 7",
  "Nov 16", "Nov 25", "Dec 4", "Dec 13", "Dec 22", "Dec 31", "Jan 9", "Jan 18", "Jan 27", "Feb 5",
];

/* The canvas is 12px type stretched to its panel. */
const SX = 1.1;
const SY = 0.8;
const X0 = 1052.5;
const Y0 = 976;
const DAY = 2.505;
const UNIT = 0.6693;

const curve = (() => {
  const p = daily.map((v, i) => [(i * DAY) / SX, (-v * UNIT) / SY] as Pt);
  const n = p.length;
  const d = p.slice(1).map((q, i) => (q[1] - p[i][1]) / (q[0] - p[i][0]));
  const m = p.map((_, i) => {
    if (i === 0) return d[0];
    if (i === n - 1) return d[n - 2];
    return d[i - 1] * d[i] <= 0 ? 0 : (2 * d[i - 1] * d[i]) / (d[i - 1] + d[i]);
  });
  const h = DAY / SX / 3;
  let s = `M${p[0][0]} ${p[0][1]}`;
  for (let i = 0; i < n - 1; i++) {
    const a = p[i];
    const b = p[i + 1];
    s += `C${(a[0] + h).toFixed(2)} ${(a[1] + m[i] * h).toFixed(2)} ${(b[0] - h).toFixed(2)} ${(b[1] - m[i + 1] * h).toFixed(2)} ${b[0].toFixed(2)} ${b[1].toFixed(2)}`;
  }
  return s;
})();

const ChartText = styled.text`
  font: 12px "Liberation Sans", Arial, sans-serif;
  fill: #666;
`;

const right = X0 + 299 * DAY;

const Chart = () => (
  <svg width="900" height="328" viewBox="1006 690 900 328" display="block">
    <g stroke="rgba(0,0,0,0.12)" strokeWidth="1">
      {Array.from({ length: 8 }, (_, i) => (
        <path key={i} d={`M${X0 - 11} ${Y0 - i * 50 * UNIT}H${right}`} strokeWidth=".8" />
      ))}
      {dates.map((d, i) => (
        <path key={d} d={`M${X0 + i * 9 * DAY} 741.7V984`} stroke={i ? undefined : "rgba(0,0,0,0.4)"} />
      ))}
    </g>
    {Array.from({ length: 8 }, (_, i) => (
      <ChartText key={i} textAnchor="end" transform={`translate(${X0 - 11.5} ${Y0 - i * 50 * UNIT + 3}) scale(${SX} ${SY})`}>
        {i * 50}
      </ChartText>
    ))}
    {dates.map((d, i) => (
      <ChartText key={d} textAnchor="end" transform={`translate(${X0 + i * 9 * DAY + 1.5} 988) scale(${SX} ${SY}) rotate(-50)`}>
        {d}
      </ChartText>
    ))}
    <g transform={`translate(${X0} ${Y0}) scale(${SX} ${SY})`}>
      <path d={`${curve}V0H0Z`} fill="#de2910" />
      <path d={curve} fill="none" stroke="#fff" strokeWidth="2.4" strokeDasharray="5 2" />
    </g>
    <g transform={`translate(1368 723) scale(${SX} ${SY})`}>
      <rect width="41.5" height="13.2" fill="#de2910" stroke="#fff" strokeWidth="2" strokeDasharray="5 2" />
      <ChartText x="47.4" y="10">China</ChartText>
    </g>
  </svg>
);

/* ------------------------------------------------------------------- stats */

const StatTitle = styled.h3`
  margin: 13px 0 0;
  font-size: 19.6px;
  font-weight: 700;
  line-height: 28px;
  text-align: center;
`;

const Stats = styled.div`
  margin-top: 10px;
  font-size: 17.6px;
  line-height: 28px;
`;

/* ------------------------------------------------------------------ footer */

const Footer = styled.footer`
  display: flex;
  align-items: center;
  height: 61px;
  padding-left: 318px;
  padding-top: 8px;
  color: #fff;
`;

const FooterItem = styled.span<{ $w: number }>`
  flex: none;
  width: ${(p) => p.$w}px;
  font-size: 18.7px;
`;

const LogoText = styled.text`
  font: bold 13.8px "Liberation Sans", Arial, sans-serif;
  fill: #fff;
  stroke: #fff;
  stroke-width: 0.5px;
`;

const Logo = () => (
  <svg width="64" height="25" viewBox="1601 1041 64 25">
    <LogoText x="1601.6" y="1052.2">R</LogoText>
    <LogoText x="1633.6" y="1052.2">S</LogoText>
    <LogoText x="1601.6" y="1064.2" textLength="18" lengthAdjust="spacingAndGlyphs">SC</LogoText>
    <LogoText x="1622.4" y="1064.2" textLength="20.5" lengthAdjust="spacingAndGlyphs">HO</LogoText>
    <LogoText x="1645.2" y="1064.2" textLength="18.6" lengthAdjust="spacingAndGlyphs">OL</LogoText>
    <circle cx="1649.4" cy="1048.2" r="6.2" fill="#343a40" stroke="#fff" strokeWidth=".9" />
    <path d="M1646 1051.5L1650 1047M1648.5 1045.5Q1652.5 1044 1652.6 1048Q1650 1050.8 1647.6 1048.4M1650 1045.5L1652.5 1049" fill="none" stroke="#fff" strokeWidth="1.1" />
  </svg>
);

/* --------------------------------------------------------------------- app */

export default function App() {
  return (
    <Page>
      <GlobalStyle />
      <Main>
        <Panel $height={1004} $pad="6px 7px 6px 6px">
          <Row $h={54}>
            <Search placeholder="search" />
            <ExpandIcon ml={10} mt={5} />
          </Row>
          <Row><Select w={465} h={37} /></Row>
          <Row $mt={10}><OutlineButton $w={465} $h={39}>New</OutlineButton></Row>
          <Row $mt={10} $h={38}><Stepper h={38} /></Row>
          <ListArea>
            <List>
              {countries.map((c) => (
                <Item key={c.name}>
                  <FlagCell>
                    <svg width={c.w} height={c.h ?? 21.6} viewBox={`0 0 ${c.w} ${c.h ?? 22}`} preserveAspectRatio="none">
                      {c.flag}
                    </svg>
                  </FlagCell>
                  <span>{c.name}</span>
                  <span>{c.value}</span>
                </Item>
              ))}
            </List>
            <ScrollThumb />
          </ListArea>
        </Panel>

        <RightColumn>
          <Panel>
            <MapCanvas>
              <WorldMap />
              <ZoomControl>
                <ZoomButton $line>
                  <svg width="16" height="16" viewBox="0 0 16 16"><path d="M8 .5V15.5M.5 8H15.5" stroke="#000" strokeWidth="2" /></svg>
                </ZoomButton>
                <ZoomButton>
                  <svg width="16" height="16" viewBox="0 0 16 16"><path d="M.5 8H15.5" stroke="#000" strokeWidth="2" /></svg>
                </ZoomButton>
              </ZoomControl>
              <InfoBox>
                <InfoTitle>Country total cases</InfoTitle>
                <b>China</b>
                131 of population
              </InfoBox>
              <Legend>
                {legend.map(([c, t]) => (
                  <LegendRow key={t}><Swatch $c={c} />{t}</LegendRow>
                ))}
              </Legend>
              <Attribution>Leaflet</Attribution>
            </MapCanvas>
            <Row $mt={14}>
              <Select w={409} h={44} ml={3} />
              <OutlineButton $w={410} $h={44} $ml={5}>New</OutlineButton>
              <Row $w={406} $ml={5}><Stepper h={38} /></Row>
              <ExpandIcon ml={58} mt={4} />
            </Row>
          </Panel>

          <BottomRow>
            <Panel $pad="7px 7px 6px 6px">
              <Row $h={48}>
                <Select w={334} h={37} />
                <ExpandIcon ml={48} mt={4} />
              </Row>
              <Row><OutlineButton $w={465} $h={38}>New</OutlineButton></Row>
              <Row $mt={11} $h={39}><Stepper h={39} /></Row>
              <StatTitle>China statistic</StatTitle>
              <Stats>
                <div>Confirmed: 41</div>
                <div>Deaths: 0</div>
                <div>Recovered: 131</div>
              </Stats>
            </Panel>

            <Panel $pad="7px 0 0">
              <Row $h={52}>
                <Select w={352} h={44} ml={9} />
                <OutlineButton $w={197} $h={44} $ml={5}>New</OutlineButton>
                <Row $w={183} $ml={5}><Stepper h={38} /></Row>
                <ExpandIcon ml={55} mt={4} />
              </Row>
              <Chart />
            </Panel>
          </BottomRow>
        </RightColumn>
      </Main>
      <Footer>
        <FooterItem $w={103}>lesor9</FooterItem>
        <FooterItem $w={125}>tatsmaki</FooterItem>
        <FooterItem $w={487}>TanyaNovik</FooterItem>
        <FooterItem $w={556}>2020</FooterItem>
        <Logo />
      </Footer>
    </Page>
  );
}
